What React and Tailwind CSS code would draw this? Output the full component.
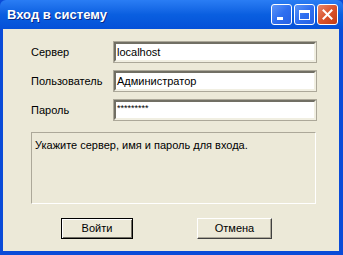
import React from "react";

const fields = [
  { label: "Сервер", value: "localhost" },
  { label: "Пользователь", value: "Администратор" },
  { label: "Пароль", value: "*********", secret: true },
];

function TitleButton({ kind }) {
  const isClose = kind === "close";
  return (
    <div
      className={`w-[21px] h-[21px] rounded-[3px] border border-white flex items-center justify-center ${
        isClose
          ? "bg-gradient-to-br from-[#e9866a] via-[#d9532c] to-[#c13b14]"
          : "bg-gradient-to-br from-[#5d95f7] via-[#2f6ff0] to-[#2560e4]"
      }`}
    >
      {kind === "min" && <div className="w-[6px] h-[3px] bg-white mt-[8px] -ml-[4px]" />}
      {kind === "max" && <div className="w-[11px] h-[10px] border border-white border-t-[3px]" />}
      {isClose && (
        <svg width="11" height="11" viewBox="0 0 11 11">
          <path d="M1.5 1.5 L9.5 9.5 M9.5 1.5 L1.5 9.5" stroke="white" strokeWidth="2" strokeLinecap="square" />
        </svg>
      )}
    </div>
  );
}

export default function App() {
  return (
    <div
      className="w-[343px] h-[255px] flex flex-col bg-[#0a4bd8] overflow-hidden"
      style={{ fontFamily: "Tahoma, 'Liberation Sans', Arial, sans-serif" }}
    >
      {/* Title bar */}
      <div className="h-[29px] shrink-0 flex items-center justify-between pl-[7px] pr-[5px] bg-gradient-to-b from-[#2a7df4] via-[#0a5fe0] to-[#0550d8] rounded-t-[6px]">
        <span className="text-white text-[13px] font-bold [text-shadow:1px_1px_0_#0a2a88]">
          Вход в систему
        </span>
        <div className="flex gap-[2px]">
          <TitleButton kind="min" />
          <TitleButton kind="max" />
          <TitleButton kind="close" />
        </div>
      </div>

      {/* Body */}
      <div className="flex-1 mx-[3px] mb-[4px] mr-[4px] bg-[#ece9d8] pt-[13px] pl-[28px] pr-[23px] text-[11px] text-black">
        <div className="flex flex-col gap-[9px]">
          {fields.map((f) => (
            <div key={f.label} className="flex items-center">
              <span className="w-[83px] shrink-0">{f.label}</span>
              <div className="flex-1 h-[20px] bg-white border-2 border-t-[#716f64] border-l-[#716f64] border-b-[#f1efe2] border-r-[#f1efe2] outline outline-1 outline-offset-0 outline-[#aca899] flex items-center pl-[1px]">
                <span className={f.secret ? "text-[9px] leading-none -mt-[3px]" : ""}>{f.value}</span>
              </div>
            </div>
          ))}
        </div>

        <div className="mt-[12px] h-[72px] border border-t-[#aca899] border-l-[#aca899] border-b-white border-r-white px-[3px] pt-[4px]">
          Укажите сервер, имя и пароль для входа.
        </div>

        <div className="mt-[14px] flex gap-[64px] pl-[30px]">
          <button className="w-[72px] h-[21px] bg-[#ece9d8] border border-black shadow-[inset_1px_1px_0_#fff,inset_-1px_-1px_0_#716f64] text-[11px]">
            Войти
          </button>
          <button className="w-[75px] h-[21px] bg-[#ece9d8] border border-t-white border-l-white border-b-[#404040] border-r-[#404040] shadow-[inset_-1px_-1px_0_#aca899] text-[11px]">
            Отмена
          </button>
        </div>
      </div>
    </div>
  );
}
